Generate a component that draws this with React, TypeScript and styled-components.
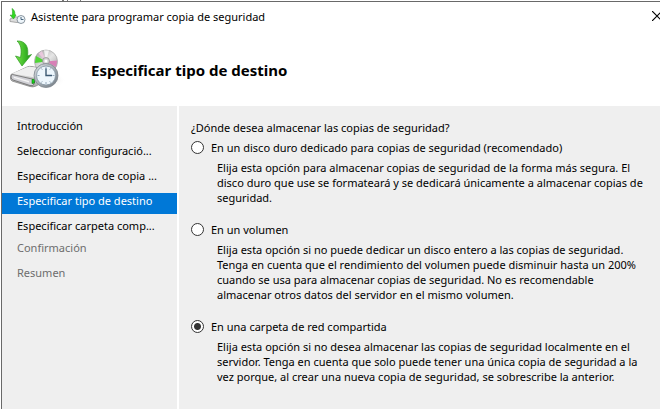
import React, { useState } from "react";
import styled, { createGlobalStyle } from "styled-components";

const GlobalStyle = createGlobalStyle`
  * { box-sizing: border-box; }
  html, body, #root { height: 100%; }
  body {
    margin: 0;
    background: #fff;
    color: #000;
    font: 11px/15px "Noto Sans", "Open Sans", sans-serif;
    overflow: hidden;
  }
  ul, h1, p { margin: 0; padding: 0; }
`;

const Desktop = styled.div`
  display: flex;
  min-height: 100%;
  padding: 1px 0 0 1px;
  background:
    linear-gradient(#777, #777) 62px 0 / 2px 1px no-repeat,
    linear-gradient(#777, #777) 67px 0 / 1px 1px no-repeat,
    linear-gradient(#777, #777) 80px 0 / 1px 1px no-repeat,
    #fff;
`;

const Dialog = styled.div`
  flex: 1;
  min-width: 0;
  display: flex;
  flex-direction: column;
  border: 1px solid #696969;
  border-width: 1px 0 0 1px;
  background: #fff;
`;

const TitleBar = styled.header`
  display: flex;
  align-items: center;
  height: 28px;
  padding-left: 7px;
  overflow: hidden;
`;

const TitleText = styled.span`
  flex: 1;
  margin-left: 5px;
  white-space: nowrap;
`;

const CloseButton = styled.button`
  display: flex;
  flex: none;
  margin-right: -2px;
  padding: 0;
  border: 0;
  background: none;
`;

const Banner = styled.div`
  display: flex;
  align-items: flex-start;
  gap: 25px;
  height: 76px;
  padding: 6px 8px 0 6px;
`;

const Heading = styled.h1`
  padding-top: 24px;
  font-size: 15px;
  line-height: 20px;
  font-weight: 700;
  white-space: nowrap;
`;

const Body = styled.div`
  flex: 1;
  display: grid;
  grid-template-columns: 175px minmax(0, 1fr);
  gap: 2px;
`;

const Sidebar = styled.nav`
  display: flex;
  flex-direction: column;
  gap: 1px;
  padding-top: 12px;
  background: #efefef;
`;

const StepList = styled.ul`
  display: flex;
  flex-direction: column;
  gap: 4px;
  list-style: none;
`;

const Step = styled.li``;

const StepLink = styled.a<{ $current?: boolean; $pending?: boolean }>`
  display: block;
  height: 21px;
  padding-left: 15px;
  line-height: 16px;
  white-space: nowrap;
  text-decoration: none;
  background: ${(p) => (p.$current ? "#0078d7" : "transparent")};
  color: ${(p) => (p.$current ? "#fff" : p.$pending ? "#6d6d6d" : "#000")};
`;

const Content = styled.main`
  padding: 14px 0 12px 12px;
  background: #efefef;
`;

const Options = styled.fieldset`
  display: flex;
  flex-direction: column;
  gap: 17px;
  min-width: 0;
  margin: 0;
  padding: 0;
  border: 0;
`;

const Question = styled.legend`
  padding: 0;
  margin-bottom: 5px;
`;

const Option = styled.div`
  display: flex;
  flex-direction: column;
  gap: 5px;
`;

const OptionLabel = styled.label`
  display: flex;
  align-items: center;
  gap: 7px;
  white-space: nowrap;
`;

const Radio = styled.input`
  appearance: none;
  flex: none;
  width: 13px;
  height: 13px;
  margin: 0;
  border: 1px solid #333;
  border-radius: 50%;
  background: #fff;
  &:checked {
    background: radial-gradient(circle, #333 3px, #fff 4px);
  }
`;

const Description = styled.p`
  padding-left: 26px;
  white-space: pre;
`;

function BackupIcon() {
  return (
    <svg width="58" height="54" viewBox="0 0 58 54" aria-hidden="true">
      <defs>
        <linearGradient id="arrow" x1="0" y1="0" x2="1" y2="0">
          <stop offset="0" stopColor="#7be04c" />
          <stop offset="0.5" stopColor="#45c02c" />
          <stop offset="1" stopColor="#1f9417" />
        </linearGradient>
        <linearGradient id="drive" x1="0" y1="0" x2="0" y2="1">
          <stop offset="0" stopColor="#f2f2f2" />
          <stop offset="1" stopColor="#a9a9a9" />
        </linearGradient>
        <linearGradient id="rim" x1="0" y1="0" x2="1" y2="1">
          <stop offset="0" stopColor="#dde2e6" />
          <stop offset="1" stopColor="#6f7880" />
        </linearGradient>
        <linearGradient id="disc" x1="0" y1="0" x2="1" y2="1">
          <stop offset="0" stopColor="#9a9a9a" />
          <stop offset="0.5" stopColor="#e6e6e6" />
          <stop offset="1" stopColor="#9b9b9b" />
        </linearGradient>
        <radialGradient id="shade">
          <stop offset="0" stopColor="#999" stopOpacity="0.5" />
          <stop offset="1" stopColor="#fff" stopOpacity="0" />
        </radialGradient>
      </defs>
      <ellipse cx="36" cy="44" rx="22" ry="8" fill="url(#shade)" />
      <circle cx="38" cy="25.500" r="11.500" fill="url(#disc)" stroke="#9c9c9c" strokeWidth="0.6" />
      <path d="M38 25.500 28 20 26.800 27Z" fill="#4ed534" />
      <path d="M38 25.500 30.500 17.500 34 15Z" fill="#e9c7dc" />
      <path d="M38 25.500 49.200 24.500 48 31Z" fill="#d880b7" />
      <path d="M38 25.500 36 14.200 41 14.500Z" fill="#fafafa" opacity="0.8" />
      <circle cx="38" cy="25" r="3.500" fill="#d2d2d2" stroke="#888" strokeWidth="0.7" />
      <circle cx="38" cy="25" r="1.500" fill="#fff" />
      <path d="M3 38.500 19 31Q21 30 24 30.500L37 33V45L28 50Q25 51.500 22 50.500L4 45Q2.500 44 2.500 42Z" fill="url(#drive)" stroke="#888" strokeWidth="0.8" />
      <path d="M4 37.500 19 31.300Q21 30.500 24 31L36 33.500 27 41.500Z" fill="#efefef" />
      <path d="M4.500 38.500Q3 38.500 3 41 3 43.500 5 44L22 49.500Q25.500 50.500 26 48V45Q26 43.500 24 43Z" fill="#d0d0d5" stroke="#686868" strokeWidth="0.8" />
      <path d="M5.500 40.500 21 45V46.500L6 42Z" fill="#f4f4f4" />
      <path d="M24 43.500 26.500 43V47L24 47.500Z" fill="#12d318" stroke="#126b12" strokeWidth="0.6" />
      <circle cx="38" cy="39.500" r="12" fill="url(#rim)" stroke="#7d878e" strokeWidth="0.8" />
      <circle cx="38" cy="39.500" r="9.500" fill="#edf6fc" stroke="#8597a4" strokeWidth="0.8" />
      <path d="M38 31V33M38 46V48M29.500 39.500H31.500M44.500 39.500H46.500M33.500 32.500 34.300 33.700M42.500 32.500 41.700 33.700M33.500 46.500 34.300 45.300M42.500 46.500 41.700 45.300" stroke="#7e95a8" strokeWidth="0.8" />
      <path d="M38 32.500V39.500H44" fill="none" stroke="#3c5a73" strokeWidth="1.400" />
      <path d="M9 5C17.500 4.500 21 11 19.500 20L23.500 18.500 14 30 7.500 20 12.500 21.500C14 14 13 8.500 9 5Z" fill="url(#arrow)" stroke="#2b9a20" strokeWidth="0.7" />
    </svg>
  );
}

function SmallBackupIcon() {
  return (
    <svg width="17" height="17" viewBox="0 0 17 17" aria-hidden="true">
      <path d="M1 11 5 9H13V14L8 14.500 1 13.500Z" fill="#dcdcdc" stroke="#959595" strokeWidth="0.8" />
      <circle cx="12" cy="11.500" r="4" fill="#eef5fa" stroke="#8a969f" />
      <path d="M12 9V11.500H14.500" fill="none" stroke="#48667e" />
      <path d="M3 0.500C5.500 2 6 4 5.800 6.500L7 7 4.500 11 1 7 3 7.500C3.800 5 3.500 2.500 3 0.500Z" fill="#2fdb20" stroke="#2aa322" strokeWidth="0.6" />
    </svg>
  );
}

type StepItem = { label: string; current?: boolean; pending?: boolean };

const stepGroups: StepItem[][] = [
  [
    { label: "Introducción" },
    { label: "Seleccionar configuració..." },
    { label: "Especificar hora de copia ..." },
    { label: "Especificar tipo de destino", current: true },
    { label: "Especificar carpeta comp..." },
  ],
  [
    { label: "Confirmación", pending: true },
    { label: "Resumen", pending: true },
  ],
];

const options = [
  {
    id: "disk",
    label: "En un disco duro dedicado para copias de seguridad (recomendado)",
    lines: [
      "Elija esta opción para almacenar copias de seguridad de la forma más segura. El",
      "disco duro que use se formateará y se dedicará únicamente a almacenar copias de",
      "seguridad.",
    ],
  },
  {
    id: "volume",
    label: "En un volumen",
    lines: [
      "Elija esta opción si no puede dedicar un disco entero a las copias de seguridad.",
      "Tenga en cuenta que el rendimiento del volumen puede disminuir hasta un 200%",
      "cuando se usa para almacenar copias de seguridad. No es recomendable",
      "almacenar otros datos del servidor en el mismo volumen.",
    ],
  },
  {
    id: "share",
    label: "En una carpeta de red compartida",
    lines: [
      "Elija esta opción si no desea almacenar las copias de seguridad localmente en el",
      "servidor. Tenga en cuenta que solo puede tener una única copia de seguridad a la",
      "vez porque, al crear una nueva copia de seguridad, se sobrescribe la anterior.",
    ],
  },
];

export default function App() {
  const [selected, setSelected] = useState("share");
  return (
    <>
      <GlobalStyle />
      <Desktop>
        <Dialog role="dialog" aria-labelledby="dialog-title">
          <TitleBar>
            <SmallBackupIcon />
            <TitleText id="dialog-title">Asistente para programar copia de seguridad</TitleText>
            <CloseButton aria-label="Cerrar">
              <svg width="10" height="10" viewBox="0 0 10 10" aria-hidden="true">
                <path d="M0 0 10 10M10 0 0 10" stroke="#000" strokeWidth="1.200" />
              </svg>
            </CloseButton>
          </TitleBar>
          <Banner>
            <BackupIcon />
            <Heading>Especificar tipo de destino</Heading>
          </Banner>
          <Body>
            <Sidebar>
              {stepGroups.map((group) => (
                <StepList key={group[0].label}>
                  {group.map((s) => (
                    <Step key={s.label}>
                      <StepLink
                        href="#"
                        $current={s.current}
                        $pending={s.pending}
                        aria-current={s.current ? "step" : undefined}
                      >
                        {s.label}
                      </StepLink>
                    </Step>
                  ))}
                </StepList>
              ))}
            </Sidebar>
            <Content>
              <Options>
                <Question>¿Dónde desea almacenar las copias de seguridad?</Question>
                {options.map((o) => (
                  <Option key={o.id}>
                    <OptionLabel>
                      <Radio
                        type="radio"
                        name="destination"
                        checked={selected === o.id}
                        onChange={() => setSelected(o.id)}
                        aria-describedby={o.id + "-description"}
                      />
                      {o.label}
                    </OptionLabel>
                    <Description id={o.id + "-description"}>{o.lines.join("\n")}</Description>
                  </Option>
                ))}
              </Options>
            </Content>
          </Body>
        </Dialog>
      </Desktop>
    </>
  );
}
